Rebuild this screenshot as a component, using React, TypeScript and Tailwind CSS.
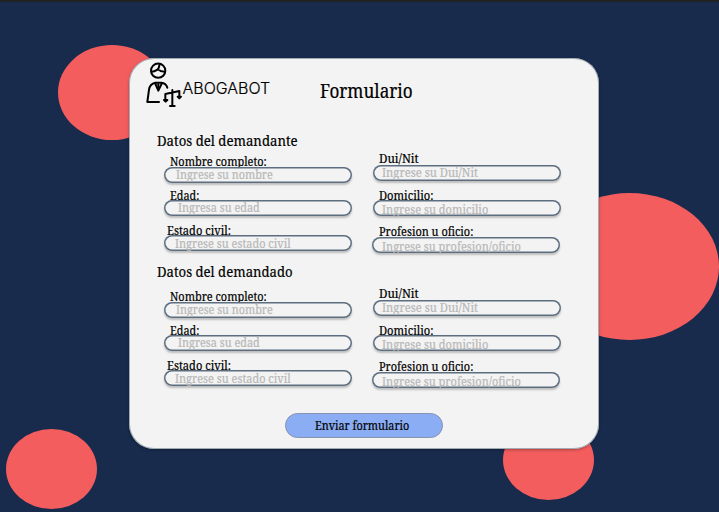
import { useLayoutEffect, useRef } from "react";
import clsx from "clsx";

const SERIF = "font-['Noto_Serif','DejaVu_Serif_Condensed','DejaVu_Serif',serif]";

/* Single line of text condensed horizontally to a given width. */
function Fit({ text, width, className }: { text: string; width: number; className?: string }) {
  const ref = useRef<HTMLSpanElement>(null);
  useLayoutEffect(() => {
    const el = ref.current;
    if (el) el.style.transform = `scaleX(${width / el.offsetWidth})`;
  }, [text, width]);
  return (
    <div className={clsx("flex items-start", className)} style={{ width }}>
      <span ref={ref} className="block shrink-0 origin-left whitespace-nowrap">
        {text}
      </span>
    </div>
  );
}

type FieldProps = {
  label: string;
  labelWidth: number;
  labelClass: string;
  hint: string;
  hintWidth: number;
  hintClass: string;
  boxClass: string;
};

function Field(f: FieldProps) {
  return (
    <div>
      <Fit text={f.label} width={f.labelWidth} className={clsx("h-4 text-[12.5px] leading-4 text-black", f.labelClass)} />
      <div
        className={clsx(
          "relative flex h-4 w-[187.5px] rounded-full bg-[#f3f3f3] shadow-[inset_0_0_0_1.5px_#5c6e80,0_2px_2px_rgba(0,0,0,0.22)]",
          f.boxClass,
        )}
      >
        <Fit text={f.hint} width={f.hintWidth} className={clsx("h-4 text-[12.5px] leading-4 text-[#b8b8b8]", f.hintClass)} />
      </div>
    </div>
  );
}

const leftFields: FieldProps[] = [
  { label: "Nombre completo:", labelWidth: 97, labelClass: "ml-[6px]", hint: "Ingrese su nombre", hintWidth: 97, hintClass: "ml-[11.5px]", boxClass: "-mt-[3px]" },
  { label: "Edad:", labelWidth: 29.5, labelClass: "ml-[5.5px] mt-[5px]", hint: "Ingresa su edad", hintWidth: 82, hintClass: "ml-[13.5px]", boxClass: "-mt-1" },
  { label: "Estado civil:", labelWidth: 64, labelClass: "ml-[2.5px] mt-[7px]", hint: "Ingrese su estado civil", hintWidth: 116, hintClass: "ml-[11px] mt-px", boxClass: "-mt-1" },
];

const rightFields: FieldProps[] = [
  { label: "Dui/Nit", labelWidth: 40, labelClass: "ml-[6px]", hint: "Ingrese su Dui/Nit", hintWidth: 96, hintClass: "ml-[8.5px]", boxClass: "-mt-[2px]" },
  { label: "Domicilio:", labelWidth: 54.5, labelClass: "ml-[6px] mt-[7px]", hint: "Ingrese su domicilio", hintWidth: 106, hintClass: "ml-[8.5px] mt-[2px]", boxClass: "-mt-1" },
  { label: "Profesion u oficio:", labelWidth: 94.5, labelClass: "ml-[6px] mt-2", hint: "Ingrese su profesion/oficio", hintWidth: 139, hintClass: "ml-[9.5px] mt-[2px]", boxClass: "-mt-[3px] -ml-px" },
];

function Section({ title, titleWidth, className, gridClass }: { title: string; titleWidth: number; className?: string; gridClass?: string }) {
  return (
    <section className={className}>
      <h2>
        <Fit text={title} width={titleWidth} className="ml-[27.5px] h-5 text-[14.5px] leading-[18px] text-black" />
      </h2>
      <div className={clsx("flex h-[102px] pl-[35px]", gridClass)}>
        <div className="w-[209px] pt-[3px]">
          {leftFields.map((f) => (
            <Field key={f.label} {...f} />
          ))}
        </div>
        <div>
          {rightFields.map((f) => (
            <Field key={f.label} {...f} />
          ))}
        </div>
      </div>
    </section>
  );
}

function LawyerLogo() {
  return (
    <svg viewBox="72 33 120 144" className="mt-[3px] h-12 w-10 shrink-0" fill="none" stroke="#000" strokeWidth="6" strokeLinecap="round" strokeLinejoin="round">
      <circle cx="114.500" cy="62" r="21.500" />
      <path d="M95 65C105 64 113 60 116 54L119 43M114 58C119 63 126 65 134 65" />
      <path d="M117 156H82L87 119C89 106 96 100 106 98H124C134 99 140 105 142 113" />
      <path d="M105 99L115 122L126 99" />
      <path d="M115 103V112" />
      <path d="M157 120V168M150 168H164M136 132L178 123M136 132V149M178 123V139" />
      <path d="M132 150H142L137 155ZM173 140H183L178 145Z" />
    </svg>
  );
}

export default function App() {
  return (
    <div className={clsx("relative h-[512px] w-[719px] overflow-hidden border-t-2 border-[#222222] bg-[#182b4d] [-webkit-text-stroke:0.2px]", SERIF)}>
      <div className="absolute left-[57.5px] top-[43px] h-[95px] w-[108px] rounded-[50%] bg-[#f35d5e]" />
      <div className="absolute left-[540px] top-[191px] h-[147px] w-[179px] rounded-[50%] bg-[#f35d5e]" />
      <div className="absolute left-[6px] top-[427px] h-[80px] w-[91px] rounded-[50%] bg-[#f35d5e]" />
      <div className="absolute left-[503px] top-[418px] h-[80px] w-[91px] rounded-[50%] bg-[#f35d5e]" />

      <main className="relative ml-[129px] mt-[56px] h-[391px] w-[470px] rounded-[25px] bg-[#f3f3f3] shadow-[inset_0_0_0_1px_rgba(110,125,140,0.6),0_1px_3px_rgba(0,0,0,0.3)]">
        <header className="flex h-[73px] pl-[15px]">
          <LawyerLogo />
          <Fit text="ABOGABOT" width={88} className="-ml-[1.5px] mt-5 h-5 font-['Inter',sans-serif] text-[16px] font-light leading-5 text-black" />
          <h1 className="ml-[49.5px] mt-[21px]">
            <Fit text="Formulario" width={93} className="h-6 text-[19.5px] leading-6 text-black" />
          </h1>
        </header>

        <Section title="Datos del demandante" titleWidth={141} />
        <Section title="Datos del demandado" titleWidth={136} className="mt-[9px]" gridClass="mt-1" />

        <button className="ml-[156px] mt-[25px] flex h-[25px] w-[157.5px] justify-center rounded-full border border-[#8793b3] bg-[#8badf3] pr-[4px] pt-[4px]">
          <Fit text="Enviar formulario" width={94.5} className="h-4 text-[12.5px] leading-4 text-black" />
        </button>
      </main>
    </div>
  );
}
